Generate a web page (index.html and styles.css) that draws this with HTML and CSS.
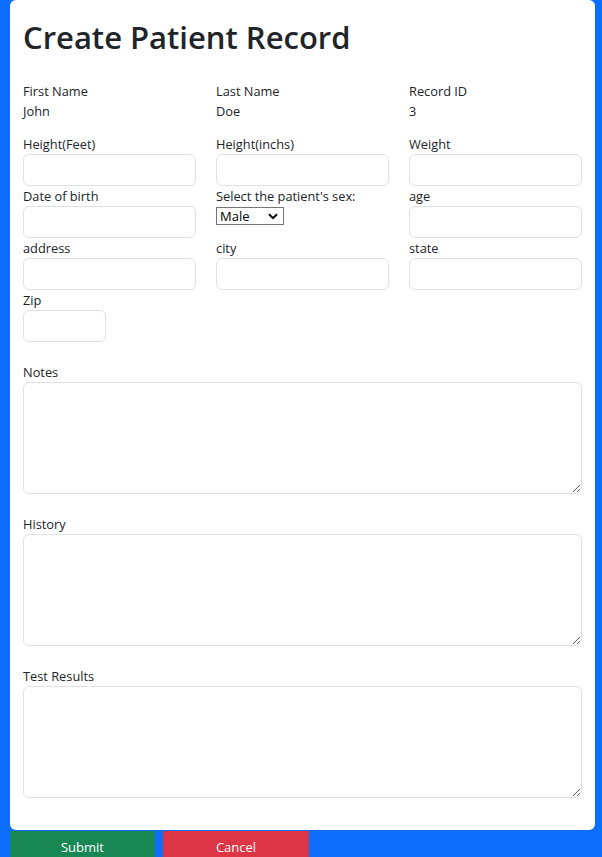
FILE: index.html
```html
<!DOCTYPE html>
<html>
<head>
<meta charset="utf-8">
<link rel="stylesheet" href="styles.css">
</head>
<body>
<div class="page">
  <form class="card">
    <h1 class="title">Create Patient Record</h1>
    <div class="grid info">
      <div class="field"><div class="label">First Name</div><div class="value">John</div></div>
      <div class="field"><div class="label">Last Name</div><div class="value">Doe</div></div>
      <div class="field"><div class="label">Record ID</div><div class="value">3</div></div>
    </div>
    <div class="grid">
      <div class="field"><label class="label">Height(Feet)</label><input class="input" type="text"></div>
      <div class="field"><label class="label">Height(inchs)</label><input class="input" type="text"></div>
      <div class="field"><label class="label">Weight</label><input class="input" type="text"></div>
      <div class="field"><label class="label">Date of birth</label><input class="input" type="text"></div>
      <div class="field"><label class="label">Select the patient's sex:</label>
        <div class="select"><span>Male</span>
          <svg class="chev" width="10" height="7" viewBox="0 0 10 7"><path d="M1 1.2 L5 5.2 L9 1.2" fill="none" stroke="#000" stroke-width="2"/></svg>
        </div>
      </div>
      <div class="field"><label class="label">age</label><input class="input" type="text"></div>
      <div class="field"><label class="label">address</label><input class="input" type="text"></div>
      <div class="field"><label class="label">city</label><input class="input" type="text"></div>
      <div class="field"><label class="label">state</label><input class="input" type="text"></div>
      <div class="field"><label class="label">Zip</label><input class="input zip" type="text"></div>
    </div>
    <div class="area"><label class="label">Notes</label><textarea class="textarea"></textarea></div>
    <div class="area"><label class="label">History</label><textarea class="textarea"></textarea></div>
    <div class="area"><label class="label">Test Results</label><textarea class="textarea"></textarea></div>
  </form>
  <div class="actions">
    <button class="btn submit" type="button">Submit</button>
    <button class="btn cancel" type="button">Cancel</button>
  </div>
</div>
</body>
</html>
```

FILE: styles.css
```css
* { box-sizing: border-box; }
html, body { margin: 0; padding: 0; }
body {
  background: #0d6efd;
  font-family: "Open Sans", "Noto Sans", sans-serif;
  font-size: 12.8px;
  color: #212529;
  height: 857px;
  overflow: hidden;
}
.page {
  padding: 0 7px 0 10px;
}
.card {
  background: #fff;
  border-radius: 6px;
  padding: 13px 13px 32px 13px;
  display: flex;
  flex-direction: column;
}
.title {
  margin: 0;
  font-size: 31px;
  font-weight: 600;
  line-height: 48px;
  height: 68px;
}
.grid {
  display: grid;
  grid-template-columns: repeat(3, 1fr);
  column-gap: 20px;
}
.info { margin-bottom: 13px; }
.field { display: flex; flex-direction: column; }
.label { display: block; line-height: 20px; height: 20px; }
.value { line-height: 20px; height: 20px; }
.input {
  height: 32px;
  width: 100%;
  border: 1px solid #dee2e6;
  border-radius: 6px;
  background: #fff;
  font: inherit;
}
.input.zip { width: 83px; }
.select {
  margin-top: 1px;
  width: 68px;
  height: 18px;
  border: 1px solid #767676;
  display: flex;
  align-items: center;
  justify-content: space-between;
  padding: 0 5px 0 3px;
  font-size: 13px;
  color: #000;
}
.chev { display: block; }
.area { margin-top: 20px; display: flex; flex-direction: column; }
.textarea {
  height: 112px;
  width: 100%;
  border: 1px solid #dee2e6;
  border-radius: 6px;
  font: inherit;
  resize: vertical;
  display: block;
}
.actions {
  display: flex;
  gap: 8px;
  margin-top: 1px;
}
.btn {
  width: 145px;
  height: 38px;
  border: none;
  border-radius: 0;
  color: #fff;
  font-family: inherit;
  font-size: 13px;
  padding: 7px 0 0;
  display: flex;
  justify-content: center;
  align-items: flex-start;
}
.submit { background: #198754; }
.cancel { background: #dc3545; width: 146px; }
```
